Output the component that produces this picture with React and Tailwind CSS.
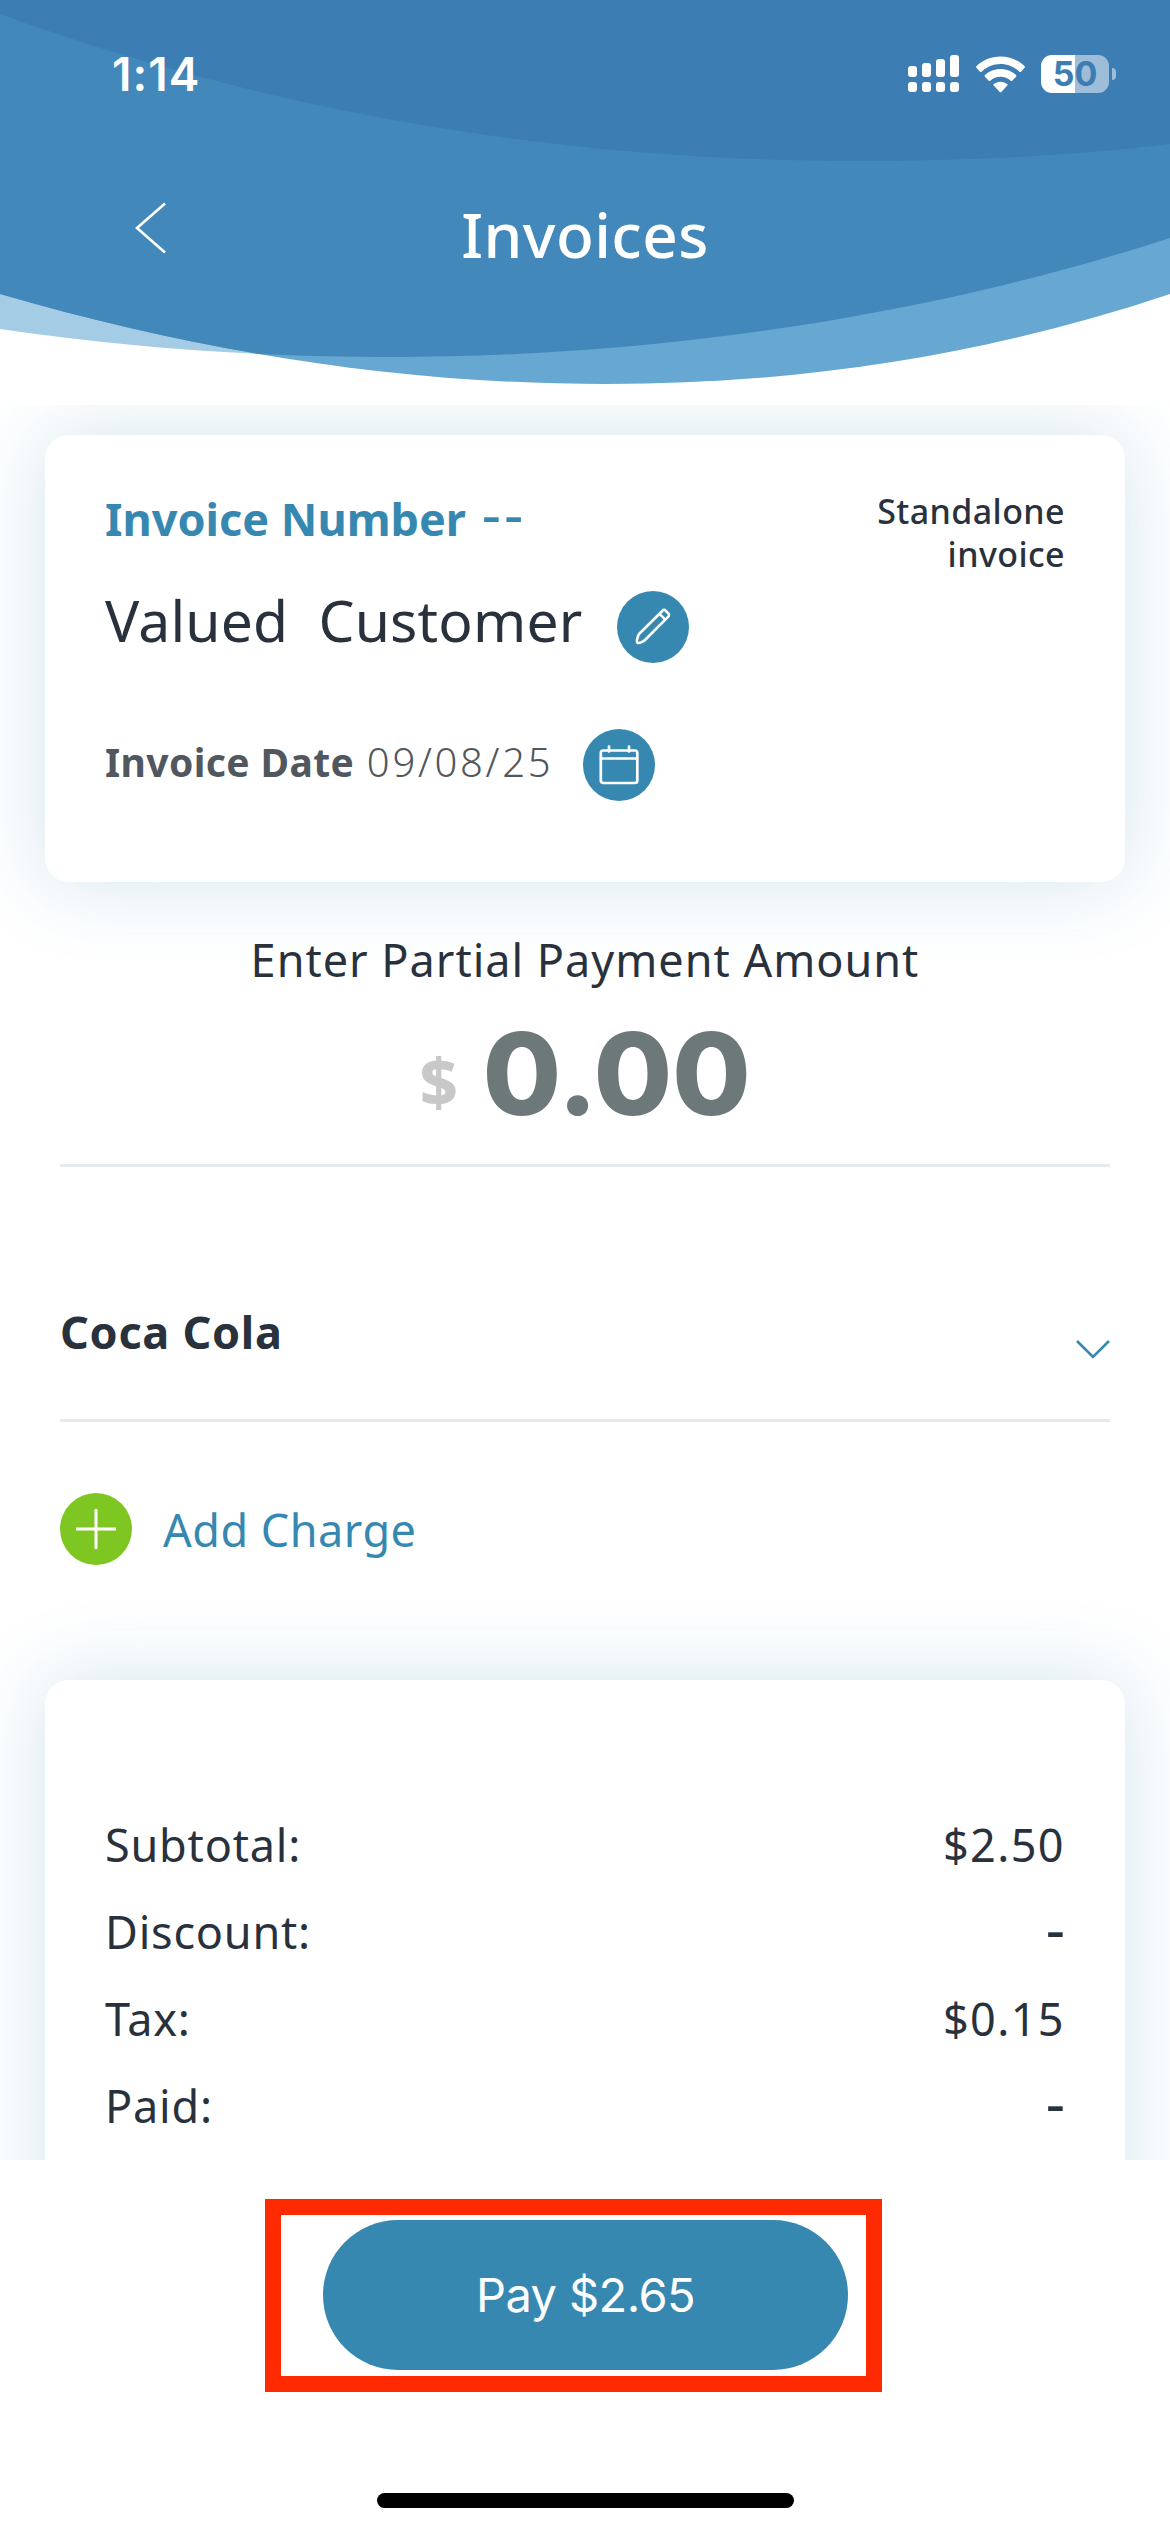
import React from "react";

const TOTALS = [
  { label: "Subtotal:", value: "$2.50" },
  { label: "Discount:", value: "-" },
  { label: "Tax:", value: "$0.15" },
  { label: "Paid:", value: "-" },
];

const SignalIcon = () => (
  <svg className="w-[52px] h-[38px]" viewBox="0 0 52 38" fill="#fff">
    <rect x="0" y="11" width="9" height="11" rx="3" />
    <rect x="14" y="8" width="9" height="14" rx="3" />
    <rect x="28" y="4" width="9" height="18" rx="3" />
    <rect x="42" y="0" width="9" height="22" rx="3" />
    <rect x="0" y="27" width="9" height="10" rx="3" />
    <rect x="14" y="27" width="9" height="10" rx="3" />
    <rect x="28" y="27" width="9" height="10" rx="3" />
    <rect x="42" y="27" width="9" height="10" rx="3" />
  </svg>
);

const WifiIcon = () => (
  <svg className="w-[49px] h-[37px]" viewBox="0 0 49 37" fill="#fff">
    <path d="M24.5 0.5C34 0.5 42.5 4.2 48.6 10.2c.5.5.5 1.1 0 1.6l-3.6 3.9c-.5.5-1.1.5-1.6 0C38.5 11 31.8 8 24.5 8S10.5 11 5.6 15.7c-.5.5-1.1.5-1.6 0L.4 11.8c-.5-.5-.5-1.1 0-1.6C6.5 4.2 15 .5 24.5.5z" />
    <path d="M24.5 13c6 0 11.5 2.3 15.6 6.1.5.5.5 1.1 0 1.6l-3.9 4c-.4.4-1 .4-1.5 0-2.7-2.5-6.3-4-10.2-4s-7.5 1.5-10.2 4c-.5.4-1.1.4-1.5 0l-3.9-4c-.5-.5-.5-1.1 0-1.6C13 15.3 18.5 13 24.5 13z" />
    <path d="M24.5 25.7c2.6 0 4.9.9 6.7 2.4.5.4.5 1.1.1 1.5l-6 6.3c-.5.5-1.1.5-1.6 0l-6-6.3c-.4-.4-.4-1.1.1-1.5 1.8-1.5 4.1-2.4 6.7-2.4z" />
  </svg>
);

const Battery = () => (
  <div className="flex items-center gap-[3px]">
    <div className="flex h-[38px] w-[68px] items-center justify-center rounded-[11px] bg-[linear-gradient(90deg,#fff_50%,#9dbdd9_50%)]">
      <span className="font-['Inter'] text-[34px] leading-none font-bold text-[#3c7db3]">
        50
      </span>
    </div>
    <div className="h-3 w-1 rounded-r-full bg-[#9dbdd9]" />
  </div>
);

const PencilIcon = () => (
  <svg
    className="h-[38px] w-[38px]"
    viewBox="0 0 38 38"
    fill="none"
    stroke="#fff"
    strokeWidth="2.6"
    strokeLinejoin="round"
  >
    <path d="M5.5 25.5 28.5 2.8c1-1 2.3-1 3.3 0l2.5 2.5c1 1 1 2.3 0 3.3L11.5 31.5c-1.5 1.5-6 4.3-8 3.3-1.5-.8.5-7.8 2-9.3z" />
    <path d="M25.5 5.8 31.3 11.6" />
  </svg>
);

const CalendarIcon = () => (
  <svg
    className="h-10 w-10"
    viewBox="0 0 40 40"
    fill="none"
    stroke="#fff"
    strokeWidth="2.7"
    strokeLinecap="round"
  >
    <rect x="1.8" y="5.5" width="36.5" height="32.5" rx="2.5" />
    <path d="M2 13.5h36M10 1.5v5M30 1.5v5" />
  </svg>
);

const Header = () => (
  <header className="relative h-[405px] overflow-hidden bg-white">
    <svg className="absolute inset-0 h-[405px] w-[1170px]" viewBox="0 0 1170 405">
      <defs>
        <clipPath id="wave">
          <path d="M0 0V294C200 352 400 384 606 384C800 384 985 356 1170 294V0z" />
        </clipPath>
      </defs>
      <path
        d="M0 0V329C130 348 260 357 390 357C650 357 920 319 1170 238V0z"
        fill="#a5cce5"
      />
      <g clipPath="url(#wave)">
        <rect width="1170" height="405" fill="#67a8d2" />
        <path
          d="M0 0V329C130 348 260 357 390 357C650 357 920 319 1170 238V0z"
          fill="#4388bb"
        />
      </g>
      <path d="M0 0V14C270 112 560 161 858 161C965 161 1070 156 1170 144V0z" fill="#3c7db3" />
    </svg>

    <div className="relative flex h-[148px] items-center justify-between pr-[54px] pl-[112px]">
      <span className="font-['Inter'] text-[46px] font-semibold tracking-[1.1px] text-white">
        1:14
      </span>
      <div className="flex items-center gap-4">
        <SignalIcon />
        <WifiIcon />
        <Battery />
      </div>
    </div>

    <div className="relative grid h-[172px] grid-cols-[1fr_auto_1fr] items-center">
      <button className="mb-3 ml-[135px] justify-self-start">
        <svg className="h-[52px] w-[31px]" viewBox="0 0 31 52" fill="none">
          <path d="M30 1.5 2 26l28 24.5" stroke="#fff" strokeWidth="2.6" />
        </svg>
      </button>
      <h1 className="text-[62px] leading-none font-medium tracking-[0.4px] text-white">
        Invoices
      </h1>
    </div>
  </header>
);

const InvoiceCard = () => (
  <section className="mx-[45px] mt-[30px] h-[447px] rounded-3xl bg-white px-[60px] pt-[55px] shadow-[0_0_80px_rgba(54,137,180,0.22)]">
    <div className="flex h-[89px] items-start justify-between">
      <h2 className="mt-[-7px] text-[45px] leading-[60px] font-bold text-[#3788b1]">
        Invoice Number{" "}
        <span className="ml-1 text-[60px] leading-none font-normal tracking-[3px]">
          --
        </span>
      </h2>
      <p className="w-[240px] text-right text-[34px] leading-[43px] font-medium tracking-[0.4px] text-[#29323c]">
        Standalone <br /> invoice
      </p>
    </div>
    <div className="flex h-[96px] items-center">
      <span className="mb-3.5 w-[512px] text-[57px] leading-none font-normal tracking-[0.2px] whitespace-pre text-[#29323c]">
        Valued  Customer
      </span>
      <button className="flex h-[72px] w-[72px] items-center justify-center rounded-full bg-[#3788b1]">
        <PencilIcon />
      </button>
    </div>
    <div className="mt-[54px] flex h-[72px] items-center">
      <span className="mb-1.5 w-[478px] text-[39px] leading-none font-bold tracking-[0.4px] whitespace-nowrap text-[#50575e]">
        Invoice Date{" "}
        <span className="ml-0.5 text-[40px] font-[350] tracking-[2.7px]">09/08/25</span>
      </span>
      <button className="flex h-[72px] w-[72px] items-center justify-center rounded-full bg-[#3788b1]">
        <CalendarIcon />
      </button>
    </div>
  </section>
);

export default function App() {
  return (
    <div className="flex h-[2532px] w-[1170px] flex-col overflow-hidden bg-white font-['Noto_Sans',sans-serif] text-[#29323c]">
      <Header />

      <main className="h-[1755px] overflow-hidden">
        <InvoiceCard />

        <div className="mx-[60px] h-[285px] border-b-[3px] border-[#e4ecef] pt-[48px] text-center">
          <p className="text-[45px] leading-[60px] tracking-[1px]">
            Enter Partial Payment Amount
          </p>
          <div className="mt-[26px] flex h-[115px] items-center justify-center gap-[25px] leading-none">
            <span className="mt-3 text-[66px] font-extrabold text-[#c8c8c8]">$</span>
            <span className="font-['Inter'] text-[114px] font-extrabold tracking-[-0.5px] text-[#6c7879]">
              0.00
            </span>
          </div>
        </div>

        <div className="mx-[60px] flex h-[255px] items-center justify-between border-b-[3px] border-[#e4eaed] pt-[76px]">
          <h3 className="text-[45px] leading-none font-bold tracking-[0.7px]">
            Coca Cola
          </h3>
          <svg className="mt-9 h-[19px] w-[34px]" viewBox="0 0 34 19" fill="none">
            <path d="M1 1 17 17 33 1" stroke="#3788b1" strokeWidth="2.6" />
          </svg>
        </div>

        <div className="mx-[60px] mt-[71px] flex h-[72px] items-center gap-[31px]">
          <button className="flex h-[72px] w-[72px] items-center justify-center rounded-full bg-[#7ec723]">
            <svg className="h-10 w-10" viewBox="0 0 40 40" fill="none">
              <path d="M20 1v38M1 20h38" stroke="#fff" strokeWidth="3" strokeLinecap="round" />
            </svg>
          </button>
          <span className="text-[45px] leading-none tracking-[0.5px] text-[#3788b1]">
            Add Charge
          </span>
        </div>

        <section className="mx-[45px] mt-[115px] h-[600px] rounded-3xl bg-white px-[60px] pt-[121px] shadow-[0_0_80px_rgba(54,137,180,0.22)]">
          {TOTALS.map((row) => (
            <div
              key={row.label}
              className="flex h-[87px] items-center justify-between text-[45px] leading-none"
            >
              <span className="tracking-[0.8px]">{row.label}</span>
              {row.value === "-" ? (
                <span className="mb-2 text-[60px]">-</span>
              ) : (
                <span className="tracking-[1.4px]">{row.value}</span>
              )}
            </div>
          ))}
        </section>
      </main>

      <footer className="flex grow flex-col items-center bg-white pt-[39px]">
        <div className="mr-[23px] flex h-[193px] w-[617px] items-start justify-end border-[16px] border-[#ff2a00] pt-[5px] pr-[18px]">
          <button className="h-[150px] w-[525px] rounded-full bg-[#3788b1] font-['Inter'] text-[47px] tracking-[-0.6px] text-white">
            Pay $2.65
          </button>
        </div>
        <div className="mt-[101px] h-[15px] w-[417px] rounded-full bg-black" />
      </footer>
    </div>
  );
}
